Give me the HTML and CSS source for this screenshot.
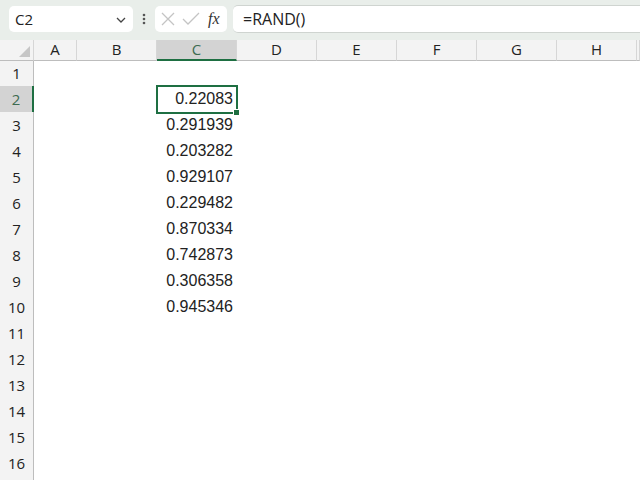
FILE: index.html
```html
<!DOCTYPE html>
<html lang="en">
<head>
    <meta charset="UTF-8">
    <title>RAND - Sheet</title>
    <link rel="stylesheet" href="styles.css">
</head>
<body>
    <div class="formula-bar">
        <div class="name-box">
            <span>C2</span>
            <svg class="chevron" width="12" height="8" viewBox="0 0 12 8"><path d="M2 2 L6 6 L10 2" fill="none" stroke="#444" stroke-width="1.3"/></svg>
        </div>
        <div class="dots">
            <svg width="4" height="14" viewBox="0 0 4 14"><circle cx="2" cy="3" r="1.3" fill="#555"/><circle cx="2" cy="7" r="1.3" fill="#555"/><circle cx="2" cy="11" r="1.3" fill="#555"/></svg>
        </div>
        <div class="fx-box">
            <svg width="16" height="16" viewBox="0 0 16 16"><path d="M2 2 L14 14 M14 2 L2 14" stroke="#c4c4c4" stroke-width="1.3"/></svg>
            <svg width="18" height="16" viewBox="0 0 18 16"><path d="M1 8 L6 13 L17 2" fill="none" stroke="#c4c4c4" stroke-width="1.3"/></svg>
            <span class="fx">fx</span>
        </div>
        <div class="formula-input">=RAND()</div>
    </div>

    <div class="sheet">
        <div class="row header-row">
            <div class="corner"><span class="tri"></span></div>
            <div class="col-head">A</div>
            <div class="col-head">B</div>
            <div class="col-head selected">C</div>
            <div class="col-head">D</div>
            <div class="col-head">E</div>
            <div class="col-head">F</div>
            <div class="col-head">G</div>
            <div class="col-head">H</div>
            <div class="col-head"></div>
        </div>
        <div id="rows"></div>
    </div>

    <script>
        const values = ['', '0.22083', '0.291939', '0.203282', '0.929107', '0.229482',
            '0.870334', '0.742873', '0.306358', '0.945346'];
        const rows = document.getElementById('rows');
        let html = '';
        for (let i = 1; i <= 17; i++) {
            const v = values[i - 1] || '';
            const sel = i === 2 ? ' selected' : '';
            const label = i <= 16 ? i : '';
            html += `<div class="row">
                <div class="row-head${sel}">${label}</div>
                <div class="cell"></div>
                <div class="cell num${i === 2 ? ' active' : ''}">${v}</div>
                <div class="cell"></div>
            </div>`;
        }
        rows.innerHTML = html;
    </script>
</body>
</html>
```

FILE: styles.css
```css
body {
    margin: 0;
    font-family: "Open Sans", "Liberation Sans", sans-serif;
    background: #fff;
    width: 640px;
    height: 480px;
    overflow: hidden;
    color: #222;
}
.formula-bar {
    height: 40px;
    background: #e9eeea;
    display: flex;
    align-items: flex-start;
    padding-top: 6px;
    box-sizing: border-box;
}
.name-box {
    margin-left: 9px;
    width: 124px;
    height: 26px;
    background: #fff;
    border-radius: 5px;
    display: flex;
    align-items: center;
    justify-content: space-between;
    padding: 0 6px 0 6px;
    box-sizing: border-box;
    font-size: 15px;
    color: #222;
}
.chevron {
    margin-top: 2px;
}
.dots {
    width: 22px;
    height: 26px;
    display: flex;
    align-items: center;
    justify-content: center;
}
.fx-box {
    width: 72px;
    height: 26px;
    background: #fff;
    border-radius: 5px;
    display: flex;
    align-items: center;
    gap: 6px;
    padding-left: 5px;
    box-sizing: border-box;
}
.fx {
    font-family: "Liberation Serif", serif;
    font-style: italic;
    font-size: 16px;
    color: #333;
    margin-left: 2px;
}
.formula-input {
    margin-left: 6px;
    flex: 1;
    height: 26px;
    background: #fff;
    border-radius: 5px 0 0 5px;
    border-top: 1px solid #cfd4d0;
    border-bottom: 1px solid #cfd4d0;
    margin-top: -1px;
    padding-left: 10px;
    font-size: 16px;
    line-height: 26px;
    color: #222;
}
.sheet {
    font-size: 15px;
}
.row {
    display: grid;
    grid-template-columns: 34px 123px 80px 1fr;
    height: 26px;
}
.header-row {
    grid-template-columns: 34px 43px repeat(7, 80px) 1fr;
    height: 20px;
    background: #f3f3f3;
}
.corner,
.col-head {
    border-right: 1px solid #d6d6d6;
    border-bottom: 1px solid #bdbdbd;
    box-sizing: border-box;
    text-align: center;
    line-height: 19px;
    position: relative;
}
.tri {
    position: absolute;
    right: 3px;
    bottom: 3px;
    width: 0;
    height: 0;
    border-left: 11px solid transparent;
    border-bottom: 11px solid #c6c6c6;
}
.col-head.selected {
    background: #d3d3d3;
    border-bottom: 2px solid #1e6f42;
    color: #3d6b50;
}
.row-head {
    background: #f3f3f3;
    border-right: 1px solid #bdbdbd;
    border-bottom: 1px solid #d6d6d6;
    box-sizing: border-box;
    text-align: center;
    line-height: 26px;
}
.row-head.selected {
    background: #d3d3d3;
    border-right: 2px solid #1e6f42;
    color: #3d6b50;
}
.cell {
    line-height: 26px;
}
.num {
    text-align: right;
    padding-right: 4px;
    font-family: "Liberation Sans", sans-serif;
    font-size: 16px;
}
.active {
    position: relative;
}
.active::after {
    content: "";
    position: absolute;
    left: -1px;
    top: -1px;
    right: -1px;
    bottom: -1px;
    border: 2px solid #1e6f42;
}
.active::before {
    content: "";
    position: absolute;
    right: -3px;
    bottom: -3px;
    width: 5px;
    height: 5px;
    background: #1e6f42;
    border: 1px solid #fff;
    z-index: 1;
}
```
